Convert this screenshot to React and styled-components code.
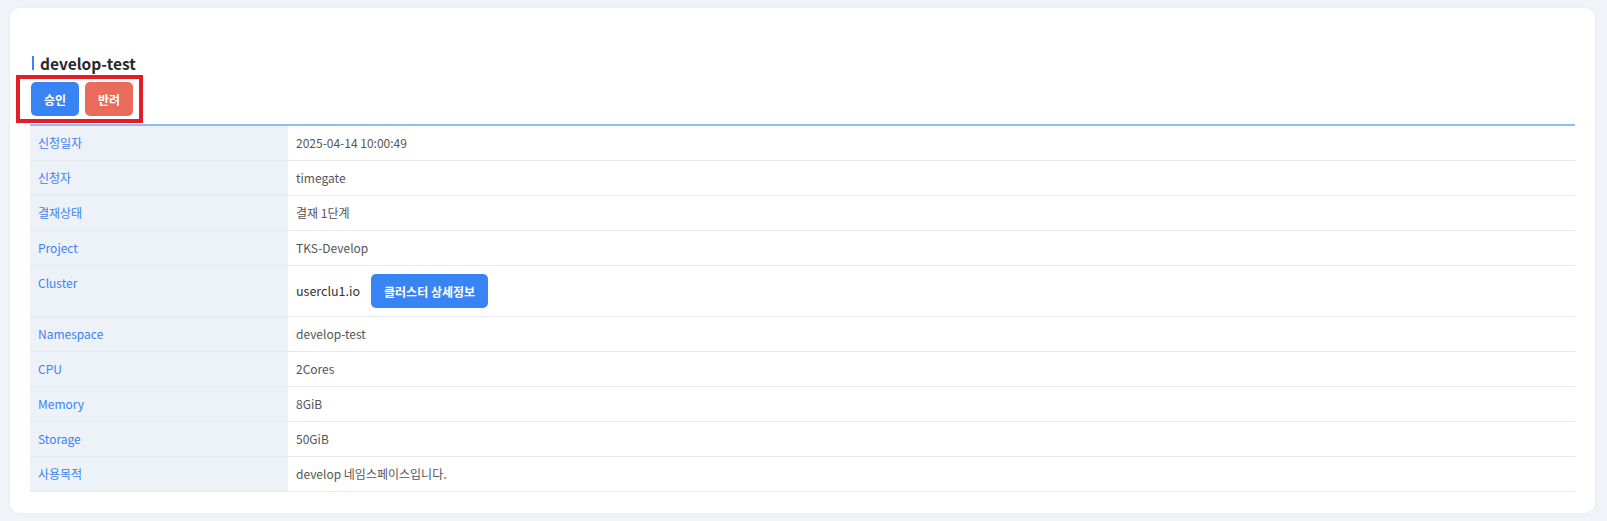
import React from "react";
import styled, { createGlobalStyle } from "styled-components";

const GlobalStyle = createGlobalStyle`
  body {
    margin: 0;
    background: #f0f3f7;
    font-family: "Noto Sans CJK KR", "Noto Sans", sans-serif;
  }
`;

const Page = styled.div`
  padding: 8px 12px 9px 10px;
`;

const Card = styled.div`
  background: #ffffff;
  border-radius: 10px;
  padding: 45px 20px 21px 20px;
  box-shadow: 0 0 4px rgba(30, 50, 90, 0.04);
`;

const Title = styled.h2`
  display: flex;
  align-items: center;
  margin: 0;
  padding-left: 2px;
  height: 20px;
  font-size: 15.5px;
  font-weight: 700;
  color: #2a2a2a;
  &::before {
    content: "";
    display: block;
    width: 2px;
    height: 14px;
    background: #3b82f6;
    margin-right: 6px;
  }
`;

const ButtonRow = styled.div`
  position: relative;
  display: flex;
  gap: 6px;
  margin: 9px 0 8px 1px;
  width: fit-content;

  /* red annotation box drawn over the buttons */
  &::after {
    content: "";
    position: absolute;
    top: -7px;
    bottom: -7px;
    left: -15px;
    right: -10px;
    border: 4px solid #e41e26;
    pointer-events: none;
  }
`;

const Button = styled.button`
  height: 34px;
  padding: 0 ${(p) => (p.wide ? "13px" : "0")};
  min-width: 48px;
  border: none;
  border-radius: 5px;
  background: ${(p) => (p.variant === "danger" ? "#e96b5b" : "#3984f4")};
  color: #fff;
  font-family: inherit;
  font-size: 12px;
  font-weight: 700;
  cursor: pointer;
`;

const Table = styled.div`
  display: grid;
  grid-template-columns: 258px 1fr;
  border-top: 2px solid #93bbf5;
`;

const Label = styled.div`
  background: #edf1f8;
  color: #3b82f6;
  font-size: 12px;
  line-height: 18px;
  padding: 8px 8px;
  border-bottom: 1px solid #e6e8ec;
`;

const Value = styled.div`
  display: flex;
  align-items: center;
  min-height: 18px;
  padding: 8px 8px;
  color: #555;
  font-size: 12px;
  line-height: 18px;
  border-bottom: 1px solid #e6e8ec;
`;

const ClusterName = styled.span`
  color: #333;
  font-size: 12.5px;
  margin-right: 11px;
`;

const rows = [
  ["신청일자", "2025-04-14 10:00:49"],
  ["신청자", "timegate"],
  ["결재상태", "결재 1단계"],
  ["Project", "TKS-Develop"],
  ["Cluster", null],
  ["Namespace", "develop-test"],
  ["CPU", "2Cores"],
  ["Memory", "8GiB"],
  ["Storage", "50GiB"],
  ["사용목적", "develop 네임스페이스입니다."],
];

export default function App() {
  return (
    <>
      <GlobalStyle />
      <Page>
        <Card>
          <Title>develop-test</Title>
          <ButtonRow>
            <Button>승인</Button>
            <Button variant="danger">반려</Button>
          </ButtonRow>
          <Table>
            {rows.map(([label, value]) => (
              <React.Fragment key={label}>
                <Label>{label}</Label>
                {value === null ? (
                  <Value>
                    <ClusterName>userclu1.io</ClusterName>
                    <Button wide>클러스터 상세정보</Button>
                  </Value>
                ) : (
                  <Value>{value}</Value>
                )}
              </React.Fragment>
            ))}
          </Table>
        </Card>
      </Page>
    </>
  );
}
